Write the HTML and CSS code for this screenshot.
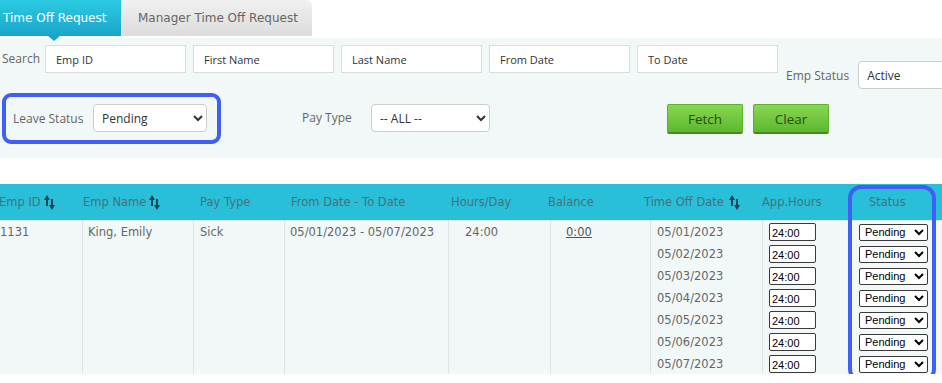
FILE: index.html
```html
<!DOCTYPE html>
<html lang="en">
<head>
    <meta charset="UTF-8">
    <title>Time Off Request</title>
    <link rel="stylesheet" href="styles.css">
</head>
<body>
    <div class="tabs">
        <div class="tab active">Time Off Request</div>
        <div class="tab">Manager Time Off Request</div>
    </div>

    <!-- Filters -->
    <div class="filters">
        <div class="filter-row">
            <label class="search-label">Search</label>
            <input class="field" type="text" placeholder="Emp ID">
            <input class="field" type="text" placeholder="First Name">
            <input class="field" type="text" placeholder="Last Name">
            <input class="field" type="text" placeholder="From Date">
            <input class="field" type="text" placeholder="To Date">
            <div class="emp-status">
                <label>Emp Status</label>
                <select class="pick pick-wide"><option>Active</option></select>
            </div>
        </div>
        <div class="filter-row second">
            <div class="leave-box">
                <label class="leave-label">Leave Status</label>
                <select class="pick pick-leave"><option>Pending</option></select>
            </div>
            <label class="pay-label">Pay Type</label>
            <select class="pick pick-pay"><option>-- ALL --</option></select>
            <button class="btn fetch">Fetch</button>
            <button class="btn clear">Clear</button>
        </div>
    </div>

    <!-- Results -->
    <div class="grid">
        <div class="grid-head">
            <div class="hc h1">Emp ID <svg class="sort" width="11" height="15" viewBox="0 0 11 15"><polygon points="0,5 3,0 6,5"/><rect x="2" y="4" width="2" height="7"/><rect x="7" y="4" width="2" height="7"/><polygon points="5,10 8,15 11,10"/></svg></div>
            <div class="hc h2">Emp Name <svg class="sort" width="11" height="15" viewBox="0 0 11 15"><polygon points="0,5 3,0 6,5"/><rect x="2" y="4" width="2" height="7"/><rect x="7" y="4" width="2" height="7"/><polygon points="5,10 8,15 11,10"/></svg></div>
            <div class="hc h3">Pay Type</div>
            <div class="hc h4">From Date - To Date</div>
            <div class="hc h5">Hours/Day</div>
            <div class="hc h6">Balance</div>
            <div class="hc h7">Time Off Date <svg class="sort" width="11" height="15" viewBox="0 0 11 15"><polygon points="0,5 3,0 6,5"/><rect x="2" y="4" width="2" height="7"/><rect x="7" y="4" width="2" height="7"/><polygon points="5,10 8,15 11,10"/></svg></div>
            <div class="hc h8">App.Hours</div>
            <div class="hc h9">Status</div>
        </div>
        <div class="grid-body">
            <div class="bc c1">1131</div>
            <div class="bc c2">King, Emily</div>
            <div class="bc c3">Sick</div>
            <div class="bc c4">05/01/2023 - 05/07/2023</div>
            <div class="bc c5">24:00</div>
            <div class="bc c6"><u>0:00</u></div>
            <div class="bc c7">
                <div class="line">05/01/2023</div>
                <div class="line">05/02/2023</div>
                <div class="line">05/03/2023</div>
                <div class="line">05/04/2023</div>
                <div class="line">05/05/2023</div>
                <div class="line">05/06/2023</div>
                <div class="line">05/07/2023</div>
            </div>
            <div class="bc c8">
                <div class="line"><input class="hrs" value="24:00"></div>
                <div class="line"><input class="hrs" value="24:00"></div>
                <div class="line"><input class="hrs" value="24:00"></div>
                <div class="line"><input class="hrs" value="24:00"></div>
                <div class="line"><input class="hrs" value="24:00"></div>
                <div class="line"><input class="hrs" value="24:00"></div>
                <div class="line"><input class="hrs" value="24:00"></div>
            </div>
            <div class="bc c9">
                <div class="line"><select class="st"><option>Pending</option></select></div>
                <div class="line"><select class="st"><option>Pending</option></select></div>
                <div class="line"><select class="st"><option>Pending</option></select></div>
                <div class="line"><select class="st"><option>Pending</option></select></div>
                <div class="line"><select class="st"><option>Pending</option></select></div>
                <div class="line"><select class="st"><option>Pending</option></select></div>
                <div class="line"><select class="st"><option>Pending</option></select></div>
            </div>
        </div>
        <div class="status-mark"></div>
    </div>
</body>
</html>
```

FILE: styles.css
```css
/* Page */
body {
    margin: 0;
    background: #ffffff;
    font-family: "DejaVu Sans", Verdana, sans-serif;
    overflow: hidden;
}

/* Tabs */
.tabs {
    display: flex;
    height: 36px;
}

.tab {
    position: relative;
    flex: none;
    height: 36px;
    line-height: 36px;
    font-size: 12px;
    color: #666;
    padding-left: 17px;
    width: 191px;
    box-sizing: border-box;
    white-space: nowrap;
    background: linear-gradient(#f0f0f0, #dcdcdc);
    border-top-right-radius: 6px;
}

.tab.active {
    width: 121px;
    padding-left: 3px;
    color: #ffffff;
    background: linear-gradient(#2ccbe3, #1aa4ca);
    border-radius: 0;
}

.tab.active::after {
    content: "";
    position: absolute;
    left: 48px;
    top: 36px;
    border-left: 6px solid transparent;
    border-right: 6px solid transparent;
    border-top: 5px solid #1aa3c9;
}

/* Filter panel */
.filters {
    margin-top: 2px;
    height: 120px;
    box-sizing: border-box;
    padding: 7px 0 0 2px;
    background: #f2f7f7;
    font-family: "Open Sans", sans-serif;
    font-size: 12px;
    color: #666;
    white-space: nowrap;
}

.filter-row {
    display: flex;
    align-items: flex-start;
    height: 43px;
}

.filter-row > * {
    flex: none;
}

.filter-row.second {
    margin-top: 5px;
}

.search-label {
    width: 43px;
    line-height: 27px;
}

.field {
    width: 141px;
    height: 28px;
    box-sizing: border-box;
    margin: 0 7px 0 0;
    padding: 0 0 0 10px;
    border: 1px solid #dcdcdc;
    background: #fff;
    font-family: "Open Sans", sans-serif;
    font-size: 11px;
    outline: none;
}

.field::placeholder {
    color: #333;
}

.emp-status {
    display: flex;
    align-items: center;
    margin: 16px 0 0 1px;
}

.emp-status label {
    margin-right: 9px;
}

.pick {
    height: 28px;
    box-sizing: border-box;
    border: 1px solid #cccccc;
    border-radius: 4px;
    background: #fff;
    padding: 0 4px;
    font-family: "Open Sans", sans-serif;
    font-size: 12px;
    color: #333;
}

.pick-wide {
    width: 130px;
}

.leave-box {
    display: flex;
    align-items: center;
    padding: 7px 10px 8px 7px;
    border: 4px solid #3f5ff5;
    border-radius: 9px;
}

.leave-label {
    width: 80px;
}

.pick-leave {
    width: 114px;
}

.pay-label {
    width: 69px;
    margin: 11px 0 0 81px;
    line-height: 28px;
}

.pick-pay {
    width: 119px;
    margin-top: 11px;
}

.btn {
    width: 76px;
    height: 30px;
    margin-top: 11px;
    border: 1px solid #5cb22e;
    border-bottom: 2px solid #3f8e1e;
    border-radius: 2px;
    background: linear-gradient(#8ad651, #5cb830);
    font-family: "Open Sans", sans-serif;
    font-size: 13.5px;
    color: #2a4d14;
}

.fetch {
    margin-left: 177px;
}

.clear {
    margin-left: 10px;
}

/* Results grid */
.grid {
    position: relative;
    margin-top: 26px;
    font-size: 11.5px;
    white-space: nowrap;
}

.grid-head {
    display: flex;
    height: 36px;
    line-height: 35px;
    background: #29bfd9;
    color: #43737c;
}

.hc {
    display: flex;
    align-items: center;
    flex: none;
}

.sort {
    margin-left: 3px;
    fill: #174759;
}

.h1 { width: 84px; margin-left: -1px; }
.h2 { width: 117px; }
.h3 { width: 91px; }
.h4 { width: 160px; }
.h5 { width: 97px; }
.h6 { width: 96px; }
.h7 { width: 118px; }
.h8 { width: 107px; }
.h9 { width: 73px; }

.h7 .sort {
    margin-left: 5px;
}

.grid-body {
    display: flex;
    background: #f2f8f8;
    border-top: 1px solid #dbe5e8;
    color: #666;
    line-height: 22px;
}

.bc {
    flex: none;
    box-sizing: border-box;
    height: 153px;
    border-right: 1px solid #dbe5e8;
}

.c1 { width: 83px; }
.c2 { width: 111px; padding-left: 5px; }
.c3 { width: 91px; padding-left: 6px; }
.c4 { width: 164px; padding-left: 5px; }
.c5 { width: 102px; padding-left: 16px; }
.c6 { width: 100px; padding-left: 15px; color: #555; }
.c7 { width: 112px; padding-left: 6px; }
.c8 { width: 87px; padding-left: 6px; }
.c9 { width: 92px; padding-left: 9px; border-right: none; }

.line {
    display: flex;
    align-items: center;
    height: 22px;
}

.hrs {
    width: 47px;
    height: 18px;
    box-sizing: border-box;
    margin: 0;
    padding: 1px 2px 0;
    border: 1px solid #3a3a3a;
    border-radius: 2px;
    font-family: "Liberation Sans", Arial, sans-serif;
    font-size: 11px;
    color: #000;
}

.st {
    width: 69px;
    height: 17px;
    box-sizing: border-box;
    margin: 0;
    padding: 0 1px;
    border: 1px solid #3a3a3a;
    border-radius: 2px;
    background: #fff;
    font-family: "Liberation Sans", Arial, sans-serif;
    font-size: 11px;
    color: #000;
}

/* highlight round the status column */
.status-mark {
    position: absolute;
    left: 848px;
    top: 1px;
    width: 88px;
    height: 197px;
    box-sizing: border-box;
    border: 4px solid #3f5ff5;
    border-radius: 13px;
}
```
